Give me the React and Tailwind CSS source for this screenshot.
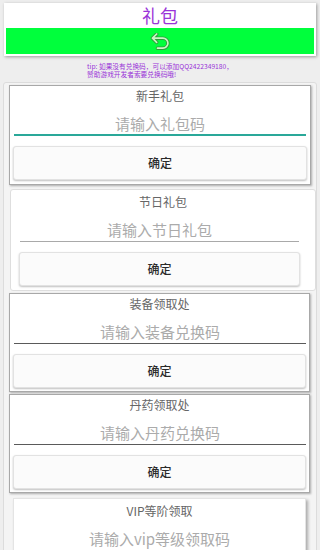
import React from "react";

const FONT = { fontFamily: '"Noto Sans CJK SC", "Noto Sans", sans-serif' };

function GiftCard({ title, placeholder, box, line, btn }) {
  return (
    <div className={`bg-white ${box}`}>
      <p className="h-[16px] text-center text-[12px] leading-[16px] text-[#666666]">
        {title}
      </p>
      <input
        type="text"
        placeholder={placeholder}
        className={`mt-[2px] block h-[30px] min-w-0 bg-transparent pt-[6px] text-center text-[15px] leading-[22px] text-[#333] outline-none placeholder:text-[#ababab] ${line}`}
      />
      <button
        type="button"
        className={`mt-[10px] block h-[34px] rounded-[3px] border border-[#e2e2e2] bg-[#fbfbfb] text-center text-[12px] font-medium text-[#2a2a2a] shadow-[0_1px_2px_rgba(0,0,0,0.25)] ${btn}`}
      >
        确定
      </button>
    </div>
  );
}

export default function App() {
  return (
    <div className="h-[550px] overflow-hidden bg-[#eeeeee]" style={FONT}>
      {/* Header */}
      <div className="mx-[4px] pt-[3px]">
        <div className="bg-white px-[2px] pb-[2px] shadow-[1px_1px_3px_rgba(0,0,0,0.35)]">
          <h1 className="h-[25px] text-center text-[18px] leading-[25px] text-[#9a34d8]">
            礼包
          </h1>
          <div className="flex h-[26px] items-center justify-center bg-[#00ff3c]">
            <svg width="20" height="17" viewBox="0 0 24 20" fill="none">
              <g strokeLinecap="round" strokeLinejoin="round">
                <path
                  d="M8 11 3 6l5-5M3 6h12.5a6 6 0 0 1 0 12H9"
                  stroke="#2f9b3c"
                  strokeWidth="4.2"
                />
                <path
                  d="M8 11 3 6l5-5M3 6h12.5a6 6 0 0 1 0 12H9"
                  stroke="#c9f7c4"
                  strokeWidth="2"
                />
              </g>
            </svg>
          </div>
        </div>
      </div>

      {/* Tip */}
      <div className="mx-auto mt-[6px] w-fit text-[6.7px] leading-[8px] text-[#9a34d8]">
        <p>tip: 如果没有兑换码，可以添加QQ2422349180，</p>
        <p>赞助游戏开发者索要兑换码哦!</p>
      </div>

      {/* Gift list */}
      <div className="mx-[3px] mt-[4px] rounded-[3px] border border-[#dcdcdc] bg-[#f4f4f4] pt-[2px]">
        <GiftCard
          title="新手礼包"
          placeholder="请输入礼包码"
          box="ml-[5px] mr-[5px] border border-[#a8a8a8] pb-[4px] pt-[2px] shadow-[1px_1px_2px_rgba(0,0,0,0.3)]"
          line="mx-[4px] w-[calc(100%-8px)] border-b-2 border-[#2aa899]"
          btn="mx-[3px] w-[calc(100%-6px)]"
        />
        <GiftCard
          title="节日礼包"
          placeholder="请输入节日礼包"
          box="ml-[6px] mt-[4px] rounded-[3px] border border-[#dedede] pb-[4px] pt-[4px]"
          line="ml-[9px] mr-[16px] w-[calc(100%-25px)] border-b border-[#a9a9a9]"
          btn="ml-[8px] mr-[15px] w-[calc(100%-23px)]"
        />
        <GiftCard
          title="装备领取处"
          placeholder="请输入装备兑换码"
          box="ml-[5px] mr-[6px] mt-[2px] border border-[#a8a8a8] pb-[3px] pt-[2px] shadow-[1px_1px_2px_rgba(0,0,0,0.3)]"
          line="ml-[4px] mr-[3px] w-[calc(100%-7px)] border-b border-[#5a5a5a]"
          btn="mx-[3px] w-[calc(100%-6px)]"
        />
        <GiftCard
          title="丹药领取处"
          placeholder="请输入丹药兑换码"
          box="ml-[5px] mr-[6px] mt-[2px] border border-[#a8a8a8] pb-[3px] pt-[2px] shadow-[1px_1px_2px_rgba(0,0,0,0.3)]"
          line="ml-[4px] mr-[3px] w-[calc(100%-7px)] border-b border-[#5a5a5a]"
          btn="mx-[3px] w-[calc(100%-6px)]"
        />
        <GiftCard
          title="VIP等阶领取"
          placeholder="请输入vip等级领取码"
          box="ml-[9px] mr-[10px] mt-[5px] border border-[#e4e4e4] pb-[4px] pt-[4px] shadow-[2px_2px_3px_rgba(0,0,0,0.3)]"
          line="mx-[4px] w-[calc(100%-8px)] border-b border-[#5a5a5a]"
          btn="mx-[3px] w-[calc(100%-6px)]"
        />
      </div>
    </div>
  );
}
